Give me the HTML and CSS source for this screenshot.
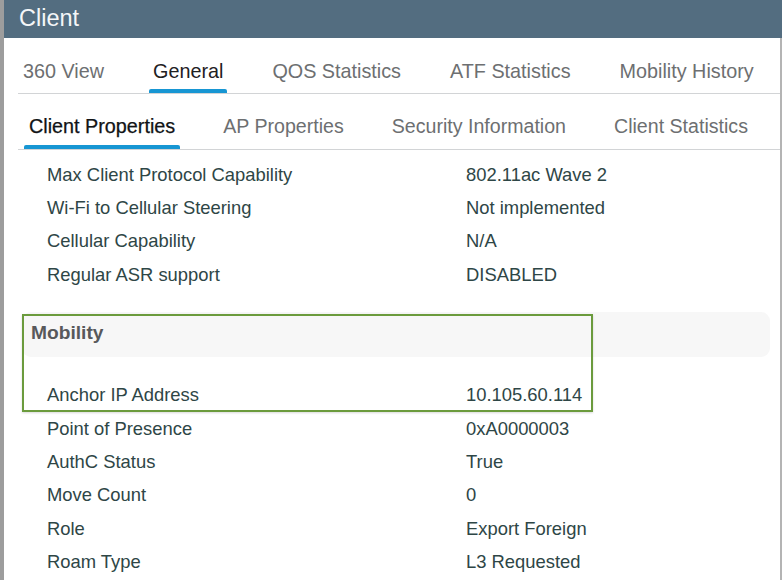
FILE: index.html
```html
<!DOCTYPE html>
<html>
<head>
<meta charset="utf-8">
<link rel="stylesheet" href="styles.css">
</head>
<body>
<div class="frame">
  <div class="header">Client</div>
  <div class="panel">
    <div class="tabs tabs-main">
      <div class="tab">360 View</div>
      <div class="tab active">General</div>
      <div class="tab">QOS Statistics</div>
      <div class="tab">ATF Statistics</div>
      <div class="tab">Mobility History</div>
    </div>
    <div class="tabs tabs-sub">
      <div class="tab active">Client Properties</div>
      <div class="tab">AP Properties</div>
      <div class="tab">Security Information</div>
      <div class="tab">Client Statistics</div>
    </div>
    <div class="props first">
      <div class="row"><span class="label">Max Client Protocol Capability</span><span class="value">802.11ac Wave 2</span></div>
      <div class="row"><span class="label">Wi-Fi to Cellular Steering</span><span class="value">Not implemented</span></div>
      <div class="row"><span class="label">Cellular Capability</span><span class="value">N/A</span></div>
      <div class="row"><span class="label">Regular ASR support</span><span class="value">DISABLED</span></div>
    </div>
    <div class="section">
      <div class="section-head">Mobility</div>
      <div class="highlight"></div>
      <div class="props">
        <div class="row"><span class="label">Anchor IP Address</span><span class="value">10.105.60.114</span></div>
        <div class="row"><span class="label">Point of Presence</span><span class="value">0xA0000003</span></div>
        <div class="row"><span class="label">AuthC Status</span><span class="value">True</span></div>
        <div class="row"><span class="label">Move Count</span><span class="value">0</span></div>
        <div class="row"><span class="label">Role</span><span class="value">Export Foreign</span></div>
        <div class="row"><span class="label">Roam Type</span><span class="value">L3 Requested</span></div>
      </div>
    </div>
  </div>
</div>
</body>
</html>
```

FILE: styles.css
```css
html, body {
  margin: 0;
  padding: 0;
  background: #ffffff;
  overflow: hidden;
}
body {
  font-family: "Liberation Sans", Arial, Helvetica, sans-serif;
  width: 784px;
  height: 580px;
}
.frame {
  width: 778px;
  height: 580px;
  border-left: 4px solid #9d9d9d;
  display: flex;
  flex-direction: column;
}
.header {
  height: 38px;
  background: #536d80;
  color: #f4f6f8;
  font-size: 23.5px;
  line-height: 37px;
  padding-left: 15px;
  flex: none;
}
.panel {
  flex: 1;
  border-right: 2px solid #b4b4b4;
  padding-left: 14px;
}
.tabs {
  display: flex;
  gap: 41px;
  border-bottom: 1.5px solid #d2d4d6;
  font-size: 19.8px;
  line-height: 22px;
  color: #6d6f71;
}
.tabs-main {
  margin-top: 22px;
  padding-left: 1px;
}
.tabs-sub {
  margin-top: 21px;
  padding-left: 7px;
  font-size: 19.6px;
  gap: 40px;
}
.tab {
  padding: 0 4px;
  white-space: nowrap;
}
.tab::after {
  content: "";
  display: block;
  height: 4px;
  margin: 7px -4px 0;
  border-radius: 2px 2px 0 0;
}
.tabs-sub .tab::after {
  margin-top: 8px;
  margin-left: -5px;
  margin-right: -5px;
}
.tab.active {
  color: #1e2022;
}
.tabs-sub .tab.active {
  color: #111315;
  font-size: 19.8px;
  -webkit-text-stroke: 0.25px #111315;
}
.tab.active::after {
  background: #1796d3;
}
.props {
  padding-left: 29px;
  font-size: 18.4px;
  color: #2e4646;
}
.props.first {
  padding-top: 8px;
}
.row {
  display: flex;
  height: 33.4px;
  align-items: center;
  white-space: nowrap;
}
.label {
  width: 419px;
  flex: none;
}
.section {
  margin-top: 20px;
  position: relative;
}
.section-head {
  margin-left: 4px;
  width: 748px;
  height: 45px;
  background: #f7f7f7;
  border-radius: 9px;
  font-size: 19.2px;
  font-weight: bold;
  color: #58595b;
  line-height: 42px;
  padding-left: 9px;
  margin-bottom: 22px;
  box-sizing: border-box;
}
.section .props {
  padding-left: 29px;
}
.highlight {
  position: absolute;
  left: 4px;
  top: 2px;
  width: 567px;
  height: 94px;
  border: 2.5px solid #6b9b3d;
  box-shadow: 0 1px 2px rgba(0, 0, 0, 0.15);
  pointer-events: none;
}
```
